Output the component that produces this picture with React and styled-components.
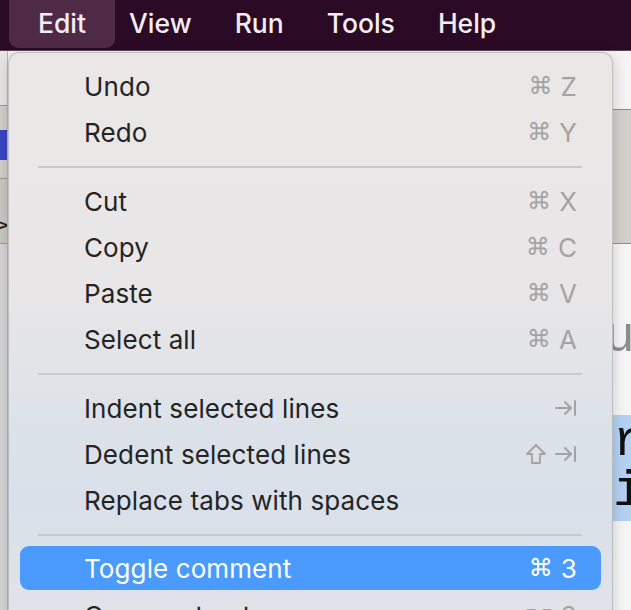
import React from "react";
import styled, { createGlobalStyle } from "styled-components";

const Global = createGlobalStyle`
  html, body { margin: 0; padding: 0; }
  body {
    width: 631px;
    height: 610px;
    overflow: hidden;
    font-family: Inter, "Noto Sans", "DejaVu Sans", sans-serif;
    -webkit-font-smoothing: antialiased;
  }
`;

const Screen = styled.div`
  position: relative;
  width: 631px;
  height: 610px;
  display: flex;
  flex-direction: column;
  overflow: hidden;
  background: #f2f2f2;
`;

const MenuBar = styled.div`
  height: 50px;
  flex: none;
  display: flex;
  align-items: stretch;
  padding-left: 16.5px;
  background: #2a0a24;
  border-bottom: 1px solid #5a4456;
`;

const MenuTitle = styled.div`
  display: flex;
  align-items: center;
  padding: 0 ${(p) => (p.$active ? 29 : 21.5)}px 3px;
  margin: 0 ${(p) => (p.$active ? -7.5 : 0)}px 2px;
  border-radius: 0 0 9px 9px;
  background: ${(p) => (p.$active ? "#4e2a47" : "transparent")};
  color: #f4eef3;
  font-size: 26.5px;
  font-weight: 500;
`;

const Workspace = styled.div`
  flex: 1;
  display: grid;
  grid-template-columns: 8px 1fr;
`;

const Sidebar = styled.div`
  display: flex;
  flex-direction: column;
  background: #d6d6d6;
  border-right: 1px solid #b8b8b8;
`;

const SideBlock = styled.div`
  height: ${(p) => p.$h}px;
  background: ${(p) => p.$bg};
  border-bottom: ${(p) => (p.$line ? "1px solid #9a9a96" : "none")};
  display: flex;
  align-items: flex-end;
  overflow: hidden;
  font-family: "DejaVu Sans", sans-serif;
  font-size: 22px;
  color: #222;
`;

const SideMark = styled.span`
  margin-left: -8px;
  margin-bottom: 6px;
`;

const Editor = styled.div`
  display: flex;
  flex-direction: column;
  background: #f5f5f5;
`;

const TitleStrip = styled.div`
  height: 58px;
  background: #f3f3f3;
  border-bottom: 1px solid #8e8e8c;
`;

const Toolbar = styled.div`
  height: 133px;
  background: #d1d0cb;
  border-bottom: 1px solid #8e8e8c;
`;

const CodeArea = styled.div`
  display: flex;
  flex-direction: column;
  padding-top: 66px;
`;

const Heading = styled.div`
  padding-left: 598px;
  height: 48px;
  font-family: "Liberation Sans", sans-serif;
  font-size: 50px;
  line-height: 48px;
  color: #8c8c8c;
  white-space: nowrap;
  overflow: hidden;
`;

const Selection = styled.div`
  margin-top: 57px;
  background: #b4d0f2;
  display: flex;
  flex-direction: column;
  padding: 2px 0 4px;
`;

const CodeLine = styled.div`
  padding-left: 605px;
  height: 50px;
  font-family: "Liberation Mono", monospace;
  font-size: 50px;
  line-height: 50px;
  color: #111;
  white-space: nowrap;
  overflow: hidden;
`;

const Dropdown = styled.div`
  position: absolute;
  left: 8px;
  top: 52px;
  width: 605px;
  height: 600px;
  box-sizing: border-box;
  padding: 10px 11px;
  border-radius: 11px 11px 0 0;
  border: 1px solid rgba(120, 120, 120, 0.35);
  background: linear-gradient(
    180deg,
    #ebe7e7 0%,
    #e8e6e7 40%,
    #dde2e9 62%,
    #d9e0e9 75%,
    #e3e4e7 100%
  );
  box-shadow: 0 4px 14px rgba(0, 0, 0, 0.18);
  display: flex;
  flex-direction: column;
`;

const Item = styled.div`
  height: ${(p) => (p.$active ? 44 : 46)}px;
  margin: ${(p) => (p.$active ? "0 0 2px" : "0")};
  flex: none;
  display: flex;
  align-items: center;
  justify-content: space-between;
  padding: 0 24px 0 64px;
  border-radius: 9px;
  background: ${(p) => (p.$active ? "#4a9bfd" : "transparent")};
  color: ${(p) => (p.$active ? "#ffffff" : "#242424")};
  font-size: 26px;
  letter-spacing: 0.1px;
`;

const Shortcut = styled.div`
  display: flex;
  align-items: center;
  gap: 8px;
  color: ${(p) => (p.$active ? "#ffffff" : "#a3a3a3")};
  font-size: 26px;
`;

const CmdGlyph = styled.span`
  font-family: "DejaVu Sans", sans-serif;
  font-size: 24px;
`;

const Separator = styled.div`
  height: 23px;
  flex: none;
  display: flex;
  align-items: center;
  padding: 0 19px 0 18px;
  &::after {
    content: "";
    flex: 1;
    height: 2px;
    background: #c8c9cb;
  }
`;

const TabIcon = () => (
  <svg width="22" height="20" viewBox="0 0 22 20" fill="none" stroke="#a3a3a3" strokeWidth="2" strokeLinecap="round" strokeLinejoin="round">
    <path d="M1 10h15" />
    <path d="M10 4l6 6-6 6" />
    <path d="M20 3v14" />
  </svg>
);

const ShiftIcon = () => (
  <svg width="22" height="22" viewBox="0 0 22 22" fill="none" stroke="#a3a3a3" strokeWidth="1.8" strokeLinejoin="round">
    <path d="M11 2L2 11h5v9h8v-9h5z" />
  </svg>
);

const Cmd = ({ k, active }) => (
  <Shortcut $active={active}>
    <CmdGlyph>⌘</CmdGlyph>
    <span>{k}</span>
  </Shortcut>
);

const menuTitles = ["Edit", "View", "Run", "Tools", "Help"];

const entries = [
  { label: "Undo", key: "Z" },
  { label: "Redo", key: "Y" },
  "sep",
  { label: "Cut", key: "X" },
  { label: "Copy", key: "C" },
  { label: "Paste", key: "V" },
  { label: "Select all", key: "A" },
  "sep",
  { label: "Indent selected lines", icons: ["tab"] },
  { label: "Dedent selected lines", icons: ["shift", "tab"] },
  { label: "Replace tabs with spaces" },
  "sep",
  { label: "Toggle comment", key: "3", active: true },
  { label: "Comment out", alt: "3" },
];

export default function App() {
  return (
    <>
      <Global />
      <Screen>
        <MenuBar>
          {menuTitles.map((t, i) => (
            <MenuTitle key={t} $active={i === 0}>
              {t}
            </MenuTitle>
          ))}
        </MenuBar>
        <Workspace>
          <Sidebar>
            <SideBlock $h={54} $bg="#e7e7e7" $line />
            <SideBlock $h={24} $bg="#d0cfca" />
            <SideBlock $h={30} $bg="#3c45c4" />
            <SideBlock $h={18} $bg="#d0cfca" $line />
            <SideBlock $h={64} $bg="#c9c8c3" $line>
              <SideMark>&gt;</SideMark>
            </SideBlock>
          </Sidebar>
          <Editor>
            <TitleStrip />
            <Toolbar />
            <CodeArea>
              <Heading>u</Heading>
              <Selection>
                <CodeLine>r</CodeLine>
                <CodeLine>i</CodeLine>
              </Selection>
            </CodeArea>
          </Editor>
        </Workspace>
        <Dropdown>
          {entries.map((e, i) =>
            e === "sep" ? (
              <Separator key={i} />
            ) : (
              <Item key={i} $active={e.active}>
                <span>{e.label}</span>
                {e.key && <Cmd k={e.key} active={e.active} />}
                {e.icons && (
                  <Shortcut>
                    {e.icons.map((ic, j) =>
                      ic === "tab" ? <TabIcon key={j} /> : <ShiftIcon key={j} />
                    )}
                  </Shortcut>
                )}
                {e.alt && (
                  <Shortcut>
                    <CmdGlyph>⌥</CmdGlyph>
                    <span>{e.alt}</span>
                  </Shortcut>
                )}
              </Item>
            )
          )}
        </Dropdown>
      </Screen>
    </>
  );
}
